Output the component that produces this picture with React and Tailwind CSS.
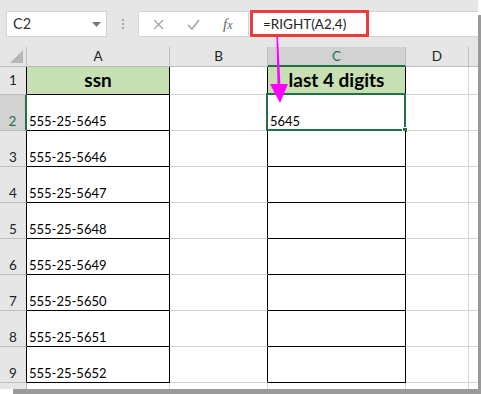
import React from 'react';

const ssns = [
  '555-25-5645',
  '555-25-5646',
  '555-25-5647',
  '555-25-5648',
  '555-25-5649',
  '555-25-5650',
  '555-25-5651',
  '555-25-5652',
];

const font = { fontFamily: 'Lato, "Liberation Sans", sans-serif' };

function Toolbar() {
  return (
    <div className="flex h-[47px] items-start bg-[#e6e6e6] pt-[11px]">
      {/* name box */}
      <div className="ml-[6px] flex h-[26px] w-[101px] items-center justify-between border border-[#d4d4d4] bg-white pl-[6px] pr-[5px]">
        <span className="text-[14.5px] text-[#333]">C2</span>
        <svg width="9" height="5" viewBox="0 0 9 5">
          <path d="M0 0h9L4.5 5z" fill="#777" />
        </svg>
      </div>
      {/* grip dots */}
      <div className="flex h-[26px] w-[31px] flex-col items-center justify-center gap-[2px]">
        <span className="h-[2px] w-[2px] bg-[#a6a6a6]" />
        <span className="h-[2px] w-[2px] bg-[#a6a6a6]" />
        <span className="h-[2px] w-[2px] bg-[#a6a6a6]" />
      </div>
      {/* cancel / enter / fx */}
      <div className="flex h-[26px] w-[111px] items-center border border-[#d4d4d4] bg-white">
        <svg className="ml-[14px]" width="11" height="11" viewBox="0 0 11 11">
          <path d="M1 1l9 9M10 1l-9 9" stroke="#a6a6a6" strokeWidth="1.4" />
        </svg>
        <svg className="ml-[23px]" width="13" height="11" viewBox="0 0 13 11">
          <path d="M1 6l4 4 7-9" stroke="#a6a6a6" strokeWidth="1.6" fill="none" />
        </svg>
        <span
          className="ml-[23px] text-[15px] italic text-[#666]"
          style={{ fontFamily: '"Liberation Serif", serif' }}
        >
          f<span className="text-[12px]">x</span>
        </span>
      </div>
      {/* formula input */}
      <div className="flex h-[26px] flex-1 items-center border-y border-[#d4d4d4] bg-white pl-[14px]">
        <span className="text-[13.5px] text-[#222]">=RIGHT(A2,4)</span>
      </div>
    </div>
  );
}

function HeaderRow() {
  return (
    <div className="flex h-[20px] text-[13.5px] text-[#222]">
      <div className="relative w-[27px] border-r border-b border-[#bdbdbd] bg-[#e6e6e6]">
        <svg className="absolute left-[10px] top-[3px]" width="13" height="13" viewBox="0 0 13 13">
          <path d="M13 0v13H0z" fill="#b7b7b7" />
        </svg>
      </div>
      <div className="flex w-[143px] items-center justify-center border-r border-b border-[#bdbdbd] bg-[#e6e6e6]">A</div>
      <div className="flex w-[98px] items-center justify-center border-r border-b border-[#bdbdbd] bg-[#e6e6e6]">B</div>
      <div className="flex w-[138px] items-center justify-center border-r border-b-2 border-r-[#bdbdbd] border-b-[#217346] bg-[#d2d2d2] text-[#217346]">
        C
      </div>
      <div className="flex w-[63px] items-center justify-center border-r border-b border-[#bdbdbd] bg-[#e6e6e6]">D</div>
      <div className="flex-1 border-b border-[#bdbdbd] bg-[#e6e6e6]" />
    </div>
  );
}

function TitleRow() {
  return (
    <div className="flex h-[28px]">
      <div className="flex w-[27px] items-center justify-center border-r border-b border-r-black border-b-[#bdbdbd] bg-[#e6e6e6] text-[13.5px] text-[#222]">
        1
      </div>
      <div className="flex w-[143px] items-center justify-center border-r border-b border-black bg-[#c6e0b4] text-[19px] font-bold text-black">
        ssn
      </div>
      <div className="w-[98px] border-r border-b border-r-black border-b-[#d4d4d4] bg-white" />
      <div className="flex w-[138px] items-center justify-center border-r border-b border-black bg-[#c6e0b4] text-[19px] font-bold text-black">
        last 4 digits
      </div>
      <div className="w-[63px] border-r border-b border-[#d4d4d4] bg-white" />
      <div className="flex-1 border-b border-[#d4d4d4] bg-white" />
    </div>
  );
}

function DataRow({ n, ssn, last }) {
  const active = n === 2;
  return (
    <div className="flex h-[36px] text-[13px] leading-[16px]">
      <div
        className={
          active
            ? 'flex w-[27px] items-end justify-center border-r-2 border-b border-r-[#217346] border-b-[#bdbdbd] bg-[#d2d2d2] pb-[1px] text-[13.5px] text-[#217346]'
            : 'flex w-[27px] items-end justify-center border-r border-b border-r-black border-b-[#bdbdbd] bg-[#e6e6e6] pb-[1px] text-[13.5px] text-[#222]'
        }
      >
        {n}
      </div>
      <div className="flex w-[143px] items-end border-r border-b border-black bg-white pb-[1px] pl-[2px] text-black">{ssn}</div>
      <div className="w-[98px] border-r border-b border-r-black border-b-[#d4d4d4] bg-white" />
      <div className="relative flex w-[138px] items-end border-r border-b border-black bg-white pb-[1px] pl-[2px] text-black">
        {last}
        {active && (
          <>
            <div className="absolute -left-[2px] -top-[2px] -right-px -bottom-px border-2 border-[#217346]" />
            <div className="absolute -right-[3px] -bottom-[3px] h-[6px] w-[6px] border border-white bg-[#217346]" />
          </>
        )}
      </div>
      <div className="w-[63px] border-r border-b border-[#d4d4d4] bg-white" />
      <div className="flex-1 border-b border-[#d4d4d4] bg-white" />
    </div>
  );
}

export default function App() {
  return (
    <div className="relative h-[394px] w-[481px] overflow-hidden bg-white" style={font}>
      <div className="h-[389px] w-[478px] overflow-hidden bg-[#e6e6e6] shadow-[8px_10px_0_-5px_#9a9a9a]">
        <Toolbar />
        <HeaderRow />
        <TitleRow />
        {ssns.map((ssn, i) => (
          <DataRow key={ssn} n={i + 2} ssn={ssn} last={i === 0 ? '5645' : ''} />
        ))}
        <div className="flex h-[36px]">
          <div className="w-[27px] border-r border-[#bdbdbd] bg-[#e6e6e6]" />
          <div className="w-[143px] border-r border-[#d4d4d4] bg-white" />
          <div className="w-[98px] border-r border-[#d4d4d4] bg-white" />
          <div className="w-[138px] border-r border-[#d4d4d4] bg-white" />
          <div className="w-[63px] border-r border-[#d4d4d4] bg-white" />
          <div className="flex-1 bg-white" />
        </div>
      </div>

      {/* annotation: red box around formula */}
      <div className="absolute left-[250px] top-[10px] h-[27px] w-[119px] border-[3px] border-[#ee3a3a]" />

      {/* annotation: magenta arrow */}
      <svg className="absolute left-0 top-0" width="481" height="394" viewBox="0 0 481 394">
        <path d="M276.5 37 L278 37 L280.5 86 L277.5 86 Z" fill="#f0f" />
        <path d="M270 84 L288 84 L280 103 Z" fill="#f0f" />
      </svg>
    </div>
  );
}
